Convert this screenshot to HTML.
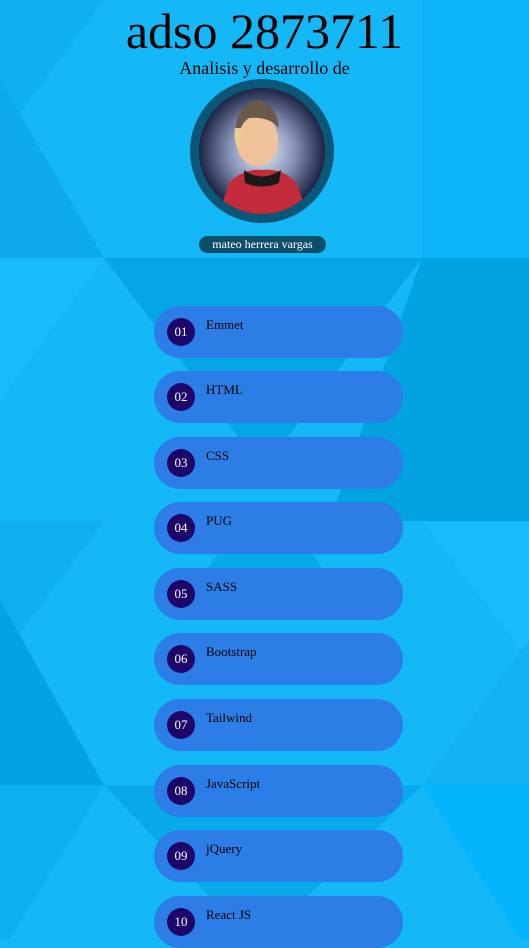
<!DOCTYPE html>
<html><head><meta charset="utf-8"><style>
html,body{margin:0;padding:0}
body{width:529px;height:939px;overflow:hidden;position:relative;background:#14b8f6;font-family:"Liberation Serif",serif}
#bg{position:absolute;left:0;top:0}
h1{position:absolute;top:2px;left:0;width:529px;text-align:center;margin:0;font-weight:normal;font-size:50px;line-height:58px;color:#000}
.sub{position:absolute;top:58px;left:0;width:529px;text-align:center;font-size:18px;line-height:20px}
.av{position:absolute;left:190px;top:79px;width:144px;height:144px;border-radius:50%;background:#0c5677}
.av svg{position:absolute;left:9px;top:9px}
.name{position:absolute;left:199px;top:236px;width:127px;height:17px;border-radius:9px;background:#0d4e6b;color:#fff;font-size:12px;line-height:17px;text-align:center}
.it{position:absolute;left:154px;width:249px;height:52px;border-radius:26px;background:#2c7de6}
.it .n{position:absolute;left:13px;top:12px;width:28px;height:28px;border-radius:50%;background:#1d076a;color:#fff;font-size:13px;line-height:28px;text-align:center}
.it .t{position:absolute;left:52px;top:11px;font-size:13px;color:#000}
</style></head><body>
<svg id="bg" width="529" height="939">
<polygon points="0,0 104,0 0,140" fill="#10b0f0"/>
<polygon points="0,80 104,258 0,258" fill="#0eaaeb"/>
<polygon points="422,0 529,0 529,258 422,258" fill="#0bb4f8"/>
<polygon points="104,258 422,258 263,470" fill="#04a6e6"/>
<polygon points="422,258 529,258 529,521 330,521" fill="#03a3e2"/>
<polygon points="0,258 104,258 0,400" fill="#18bcfb"/>
<polygon points="0,521 104,521 0,660" fill="#10aff0"/>
<polygon points="0,600 104,785 0,785" fill="#02a3e2"/>
<polygon points="240,521 290,521 330,580 200,580" fill="#08aae9"/>
<polygon points="422,521 529,521 529,660" fill="#18bcfb"/>
<polygon points="422,785 529,640 529,785" fill="#10b2f2"/>
<polygon points="104,785 422,785 263,939 250,939" fill="#07a9ea"/>
<polygon points="422,785 529,785 529,939 520,939" fill="#04b4fc"/>
<polygon points="0,785 104,785 10,939 0,939" fill="#0caff0"/>
</svg>
<h1>adso 2873711</h1>
<div class="sub">Analisis y desarrollo de</div>
<div class="av"><svg width="126" height="126" viewBox="0 0 126 126">
<defs><clipPath id="c"><circle cx="63" cy="63" r="63"/></clipPath><radialGradient id="g"><stop offset="0" stop-color="#e8eef8"/><stop offset="0.5" stop-color="#8b96b8"/><stop offset="1" stop-color="#1c2344"/></radialGradient></defs>
<g clip-path="url(#c)">
<rect width="126" height="126" fill="url(#g)"/>
<path d="M20 126 L30 95 Q45 80 63 82 Q85 80 98 96 L108 126Z" fill="#c42b3a"/>
<path d="M45 82 Q63 95 82 82 L80 95 Q63 102 46 95Z" fill="#1a1a1a"/>
<ellipse cx="58" cy="52" rx="21" ry="26" fill="#f0c29a"/>
<path d="M36 45 Q38 15 60 12 Q78 18 80 40 Q70 28 50 30 Q42 35 38 50Z" fill="#6a5848"/>
<path d="M36 40 Q34 55 40 60 L42 40Z" fill="#e8d090"/>
</g></svg></div>
<div class="name">mateo herrera vargas</div>

<div class="it" style="top:306px"><div class="n">01</div><div class="t">Emmet</div></div>
<div class="it" style="top:371px"><div class="n">02</div><div class="t">HTML</div></div>
<div class="it" style="top:437px"><div class="n">03</div><div class="t">CSS</div></div>
<div class="it" style="top:502px"><div class="n">04</div><div class="t">PUG</div></div>
<div class="it" style="top:568px"><div class="n">05</div><div class="t">SASS</div></div>
<div class="it" style="top:633px"><div class="n">06</div><div class="t">Bootstrap</div></div>
<div class="it" style="top:699px"><div class="n">07</div><div class="t">Tailwind</div></div>
<div class="it" style="top:765px"><div class="n">08</div><div class="t">JavaScript</div></div>
<div class="it" style="top:830px"><div class="n">09</div><div class="t">jQuery</div></div>
<div class="it" style="top:896px"><div class="n">10</div><div class="t">React JS</div></div>
</body></html>
